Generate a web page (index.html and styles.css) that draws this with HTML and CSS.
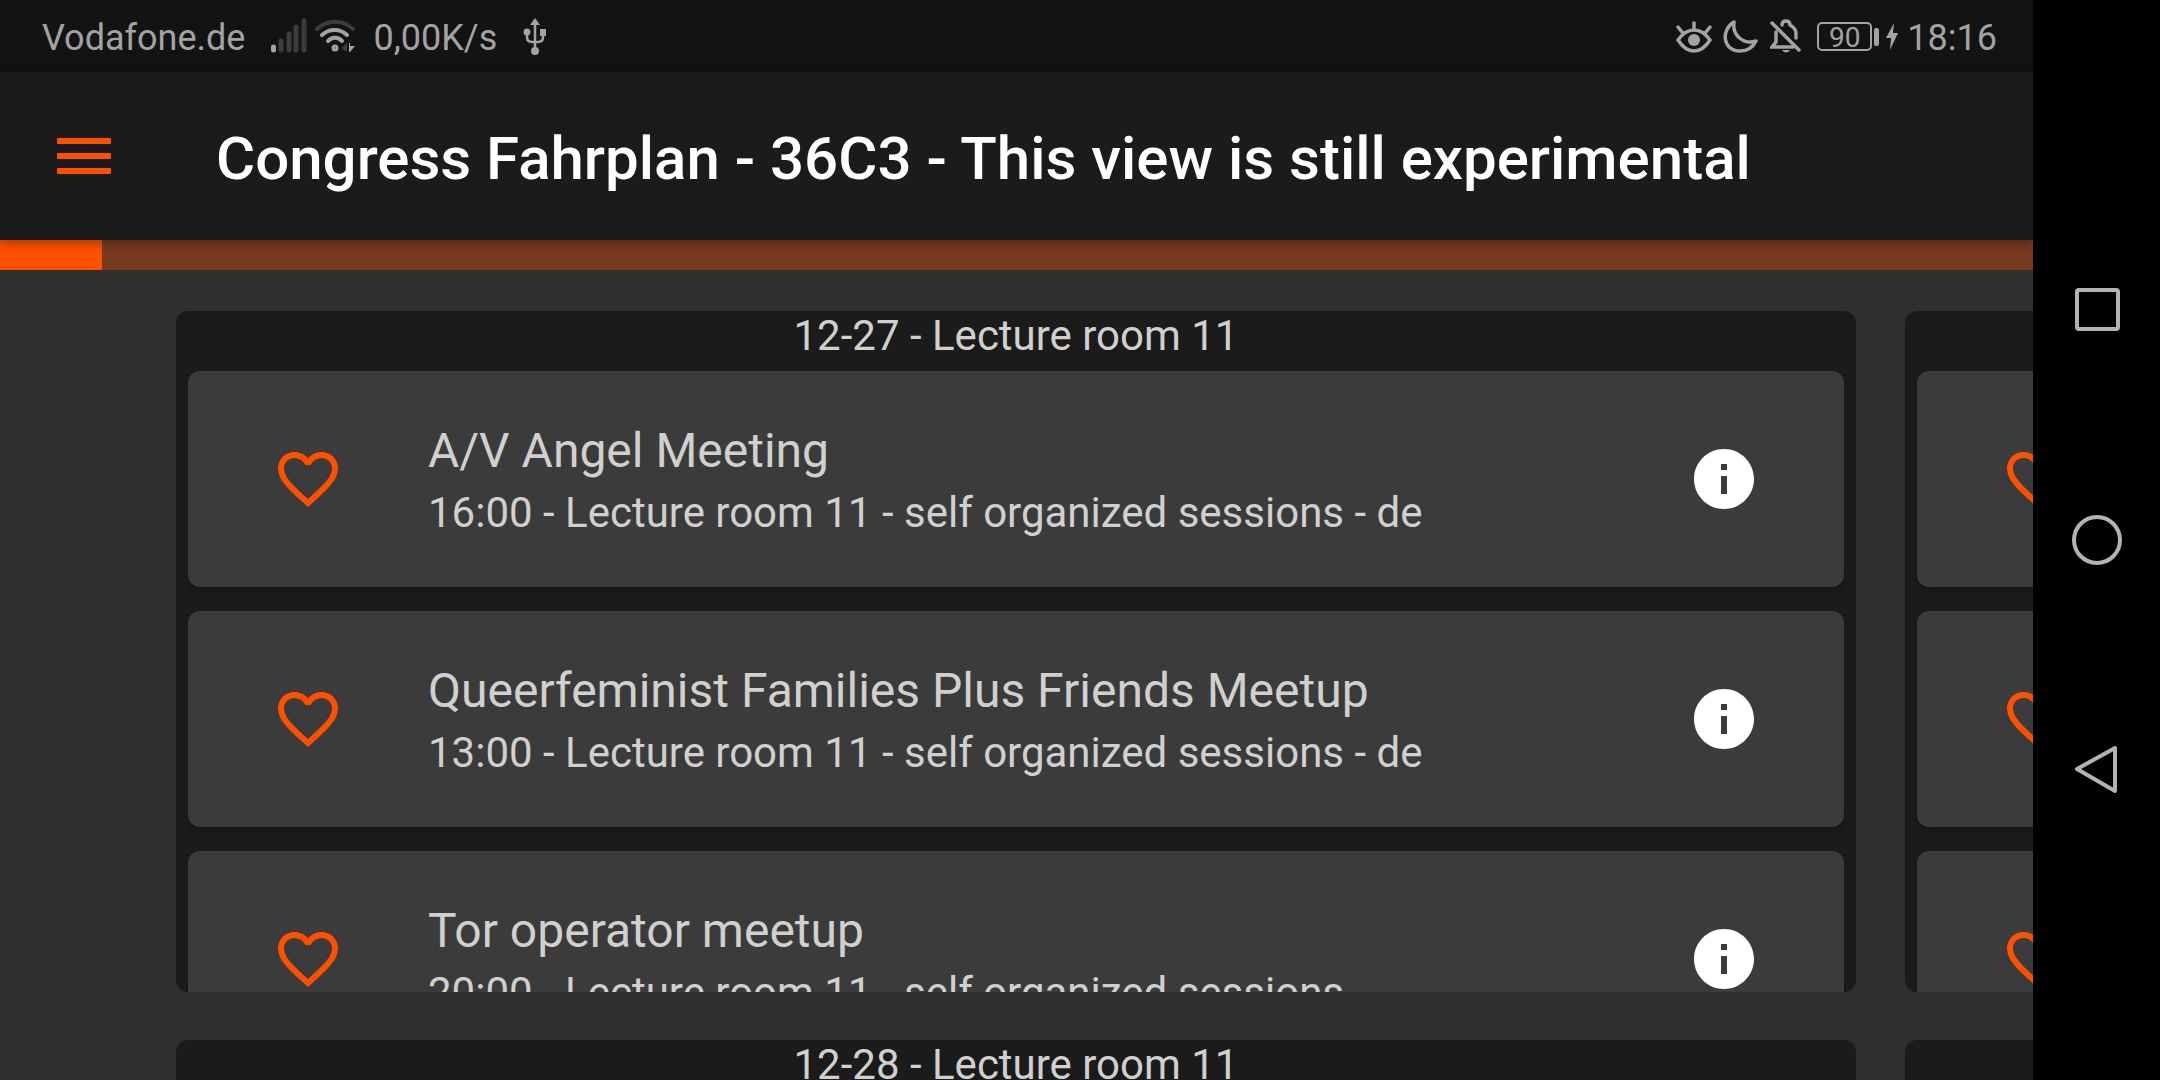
FILE: index.html
```html
<!DOCTYPE html>
<html lang="en">
<head>
<meta charset="utf-8">
<title>Congress Fahrplan</title>
<link rel="stylesheet" href="styles.css">
</head>
<body>
<svg class="defs" aria-hidden="true">
  <symbol id="heart" viewBox="0 0 24 24"><path d="M12.1 18.55l-.1.1-.11-.1C7.14 14.24 4 11.39 4 8.5 4 6.5 5.5 5 7.5 5c1.54 0 3.04 1 3.57 2.36h1.86C13.46 6 14.96 5 16.5 5c2 0 3.5 1.5 3.5 3.5 0 2.89-3.14 5.74-7.9 10.05M16.5 3c-1.74 0-3.41.81-4.5 2.08C10.91 3.81 9.24 3 7.5 3 4.42 3 2 5.41 2 8.5c0 3.77 3.4 6.86 8.55 11.53L12 21.35l1.45-1.32C18.6 15.36 22 12.27 22 8.5 22 5.41 19.58 3 16.5 3z"/></symbol>
  <symbol id="info" viewBox="0 0 24 24"><path d="M12 2C6.48 2 2 6.48 2 12s4.48 10 10 10 10-4.48 10-10S17.52 2 12 2zm1 15h-2v-6h2v6zm0-8h-2V7h2v2z"/></symbol>
</svg>
<div class="screen">
  <div class="app">
    <div class="status">
      <span class="label">Vodafone.de</span>
      <svg class="signal" viewBox="0 0 36 40" width="36" height="40" stroke-width="5" stroke-linecap="round"><path d="M10 25v9M18 18v16M25 11v23M33 5v29" stroke="#3c3c3c"/><path d="M2.500 31v3" stroke="#a3a3a3"/></svg>
      <svg class="wifi" viewBox="0 0 40 40" width="40" height="40" fill="none" stroke-width="4" stroke-linecap="round"><path d="M2 13a26 26 0 0 1 36 0" stroke="#3c3c3c"/><g stroke="#a3a3a3"><path d="M7 19a18 18 0 0 1 25 0M13 25a9 9 0 0 1 14 0"/><circle cx="20" cy="32" r="1.500"/></g><path d="M32 27v9l-6-4z" fill="#3c3c3c"/><path d="M34 27h1v3h5l-5 6h-1z" fill="#a3a3a3"/></svg>
      <span class="label speed">0,00K/s</span>
      <svg class="usb" viewBox="0 0 24 40" width="24" height="40" fill="none" stroke="#a3a3a3" stroke-width="2.500"><path d="M12 6v28M4 16v5q0 5 5 5h6q5 0 5-5v-5"/><g fill="#a3a3a3" stroke="none"><path d="M12 2l5 7H7z"/><circle cx="4" cy="16" r="3.500"/><path d="M17 13h6v7h-6z"/><circle cx="12" cy="35" r="4"/></g></svg>
      <div class="tray">
        <svg viewBox="0 0 36 40" width="36" height="40" fill="none" stroke="#a3a3a3" stroke-width="3.500" stroke-linecap="round"><path d="M2 24Q9 14 18 14t16 10Q27 35 18 35T2 24zM18 13V7M6 16l-4-5M30 16l4-5"/><circle cx="18" cy="24" r="6" fill="#a3a3a3" stroke="none"/></svg>
        <svg viewBox="0 0 36 40" width="36" height="40" fill="none" stroke="#a3a3a3" stroke-width="3.500" stroke-linejoin="round"><path d="M11 6C-2 13-1 35 17 35c8 0 13-4 16-10-12 4-24-5-22-19z"/></svg>
        <svg viewBox="0 0 32 40" width="32" height="40" fill="none" stroke="#a3a3a3" stroke-width="3.500" stroke-linecap="round"><path d="M2 7l27 27M6 16v10l-4 5h21M12 9q0-4 4-4t4 4q6 3 6 9v4"/><path d="M12 34h8q-4 5-8 0" fill="#a3a3a3" stroke="none"/></svg>
        <span class="battery">90</span>
        <svg viewBox="0 0 14 28" width="14" height="28" fill="#a3a3a3"><path d="M9 1L1 16h5L5 28l8-17H8z"/></svg>
        <time class="label">18:16</time>
      </div>
    </div>
    <header class="bar">
      <button class="menu" aria-label="Open menu"><span></span><span></span><span></span></button>
      <h1>Congress Fahrplan - 36C3 - This view is still experimental</h1>
    </header>
    <div class="progress"><div class="done"></div></div>
    <main class="board">
      <section class="room">
        <h2>12-27 - Lecture room 11</h2>
        <article class="card"><button class="fav" aria-label="Favorite"><svg><use href="#heart"/></svg></button><div class="text"><h3>A/V Angel Meeting</h3><p>16:00 - Lecture room 11 - self organized sessions - de</p></div><button class="more" aria-label="Details"><svg><use href="#info"/></svg></button></article>
        <article class="card"><button class="fav" aria-label="Favorite"><svg><use href="#heart"/></svg></button><div class="text"><h3>Queerfeminist Families Plus Friends Meetup</h3><p>13:00 - Lecture room 11 - self organized sessions - de</p></div><button class="more" aria-label="Details"><svg><use href="#info"/></svg></button></article>
        <article class="card"><button class="fav" aria-label="Favorite"><svg><use href="#heart"/></svg></button><div class="text"><h3>Tor operator meetup</h3><p>20:00 - Lecture room 11 - self organized sessions</p></div><button class="more" aria-label="Details"><svg><use href="#info"/></svg></button></article>
      </section>
      <section class="room">
        <h2></h2>
        <article class="card"><button class="fav" aria-label="Favorite"><svg><use href="#heart"/></svg></button></article>
        <article class="card"><button class="fav" aria-label="Favorite"><svg><use href="#heart"/></svg></button></article>
        <article class="card"><button class="fav" aria-label="Favorite"><svg><use href="#heart"/></svg></button></article>
      </section>
      <section class="room"><h2>12-28 - Lecture room 11</h2></section>
      <section class="room"></section>
    </main>
  </div>
  <nav class="system">
    <button aria-label="Recent apps"><svg viewBox="0 0 52 52"><rect x="6" y="6" width="41" height="39" rx="2"/></svg></button>
    <button aria-label="Home"><svg viewBox="0 0 52 52"><circle cx="26" cy="26" r="23"/></svg></button>
    <button aria-label="Back"><svg viewBox="0 0 52 52"><path d="M44 4v43L6 25z"/></svg></button>
  </nav>
</div>
</body>
</html>
```
FILE: styles.css
```css
* { box-sizing: border-box; }
body { margin: 0; background: #000; color: #d0d0ce; font-family: Roboto, "Liberation Sans", sans-serif; }
h1, h2, h3, p { margin: 0; font-weight: 400; }
button { padding: 0; border: 0; background: none; cursor: pointer; }
svg { display: block; flex: none; }
.defs { display: none; }
.screen { display: flex; height: 100vh; overflow: hidden; }
.app { flex: 1; min-width: 0; display: flex; flex-direction: column; background: #303030; overflow: hidden; }

.status { flex: none; display: flex; align-items: center; height: 72px; padding: 0 36px 0 42px; background: #131313; color: #a3a3a3; font-size: 36px; line-height: 42px; white-space: nowrap; }
.label { padding-top: 4px; }
.signal { margin-left: 26px; }
.wifi { margin-left: 8px; overflow: visible; }
.speed { margin-left: 18px; }
.usb { margin-left: 26px; }
.tray { margin-left: auto; display: flex; align-items: center; gap: 11px; }
.tray .label { margin-left: -3px; }
.battery { position: relative; width: 55px; height: 29px; margin: 0 2px 0 4px; border: 2px solid #a3a3a3; border-radius: 5px; font-size: 28px; line-height: 27px; text-align: center; }
.battery::after { content: ""; position: absolute; left: 55px; top: 4px; width: 5px; height: 18px; border-radius: 2px; background: #a3a3a3; }

.bar { position: relative; flex: none; display: flex; align-items: center; gap: 105px; height: 168px; padding-left: 57px; background: #1b1b1b; box-shadow: 0 2px 12px rgba(0, 0, 0, .4); }
.menu { display: flex; flex-direction: column; gap: 9px; width: 54px; }
.menu span { height: 6px; background: #ff5000; }
.bar h1 { padding-top: 5px; color: #fff; font-size: 60px; font-weight: 500; line-height: 72px; white-space: nowrap; }

.progress { flex: none; height: 30px; background: #793a1f; }
.done { width: 5%; height: 100%; background: #ff5000; }

.board { flex: 1; min-height: 0; display: grid; grid-template-columns: 1680px 1680px; grid-auto-rows: 681px; gap: 48px 49px; padding: 41px 0 0 176px; overflow: hidden; }
.room { display: flex; flex-direction: column; gap: 24px; padding: 0 12px; border-radius: 12px; background: #1b1b1b; overflow: hidden; }
.room h2 { flex: none; height: 36px; font-size: 42px; line-height: 49px; text-align: center; }
.card { flex: none; display: flex; align-items: center; height: 216px; padding: 0 48px; border-radius: 12px; background: #3b3b3b; box-shadow: 0 2px 4px rgba(0, 0, 0, .3); white-space: nowrap; }
.fav, .more { flex: none; display: grid; place-items: center; width: 144px; height: 144px; }
.fav svg, .more svg { width: 72px; height: 72px; }
.fav { fill: #ff5000; }
.more { fill: #fff; }
.text { flex: 1; padding: 6px 0 0 48px; }
.text h3, .text p { line-height: 62px; }
.text h3 { font-size: 48px; }
.text p { font-size: 42px; }

.system { flex: none; display: flex; flex-direction: column; align-items: center; justify-content: center; gap: 178px; width: 127px; background: #000; }
.system svg { width: 52px; height: 52px; fill: none; stroke: #b3b3b3; stroke-width: 4; stroke-linejoin: round; }
```
